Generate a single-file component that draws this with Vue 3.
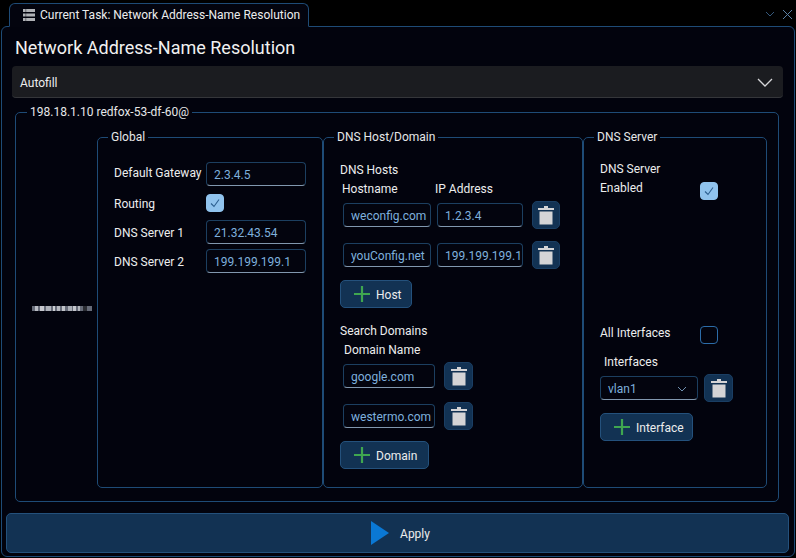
<script setup>
const hosts = [
  { name: 'weconfig.com', ip: '1.2.3.4' },
  { name: 'youConfig.net', ip: '199.199.199.1' }
]
const domains = ['google.com', 'westermo.com']
// stripes of the small device picture: [x, width, colour]
const ports = [
  [0, 60, '#666b78'], [3, 3, '#b9bcc4'], [8, 4, '#c6c8ce'], [14, 5, '#aeb2ba'], [21, 2, '#cdd0d4'],
  [25, 3, '#b6b9c0'], [30, 3, '#c2c5ca'], [36, 4, '#a9adb5'], [41, 3, '#c4c6cc'], [46, 2, '#b3b6bd'], [51, 4, '#2b2d33']
]
</script>

<template>
  <div class="app">
    <div class="tabbar">
      <div class="tab">
        <svg class="tab-icon" width="12" height="12" viewBox="0 0 12 12">
          <rect x="0" y="0" width="12" height="3" fill="#b0b2b6" />
          <rect x="0" y="4.5" width="12" height="3" fill="#b0b2b6" />
          <rect x="0" y="9" width="12" height="3" fill="#b0b2b6" />
          <rect x="2.5" y="0" width="0.7" height="12" fill="#03040e" opacity="0.6" />
        </svg>
        <span>Current Task: Network Address-Name Resolution</span>
      </div>
      <div class="win-btns">
        <svg width="10" height="6" viewBox="0 0 10 6"><path d="M1 1l4 4 4-4" fill="none" stroke="#35587c" stroke-width="1" /></svg>
        <svg width="11" height="11" viewBox="0 0 11 11"><path d="M1 1l9 9M10 1l-9 9" fill="none" stroke="#5b80a6" stroke-width="1" /></svg>
      </div>
    </div>

    <div class="panel">
      <h1 class="title">Network Address-Name Resolution</h1>

      <div class="autofill">
        <span>Autofill</span>
        <svg width="16" height="9" viewBox="0 0 16 9"><path d="M1 1l7 7 7-7" fill="none" stroke="#d6d7d9" stroke-width="1.3" /></svg>
      </div>

      <fieldset class="group outer">
        <legend>198.18.1.10 redfox-53-df-60@</legend>
        <div class="columns">
          <div class="device">
            <svg width="60" height="5" viewBox="0 0 60 5">
              <rect v-for="p in ports" :key="p[0] + p[2]" :x="p[0]" y="0" :width="p[1]" height="5" :fill="p[2]" />
            </svg>
          </div>

          <fieldset class="group global">
            <legend>Global</legend>
            <div class="form-row first">
              <label>Default Gateway</label>
              <div class="input wide">2.3.4.5</div>
            </div>
            <div class="form-row check-row">
              <label>Routing</label>
              <span class="check on">
                <svg width="12" height="12" viewBox="0 0 12 12"><path d="M2 6.5l3 3 5-7" fill="none" stroke="#2c5f8f" stroke-width="1.1" /></svg>
              </span>
            </div>
            <div class="form-row dns1">
              <label>DNS Server 1</label>
              <div class="input wide">21.32.43.54</div>
            </div>
            <div class="form-row dns2">
              <label>DNS Server 2</label>
              <div class="input wide">199.199.199.1</div>
            </div>
          </fieldset>

          <fieldset class="group hosts">
            <legend>DNS Host/Domain</legend>
            <div class="sub-title">DNS Hosts</div>
            <div class="col-heads">
              <span class="hostname">Hostname</span>
              <span>IP Address</span>
            </div>
            <div v-for="h in hosts" :key="h.name" class="entry host-entry">
              <div class="input host-name">{{ h.name }}</div>
              <div class="input host-ip">{{ h.ip }}</div>
              <button class="trash host-trash">
                <svg width="16" height="20" viewBox="0 0 16 20">
                  <rect x="0" y="3" width="16" height="2" fill="#d4d4d6" />
                  <rect x="6" y="1" width="4" height="2" fill="#d4d4d6" />
                  <rect x="1.5" y="6.5" width="13" height="13" fill="#d4d4d6" />
                </svg>
              </button>
            </div>
            <button class="add add-host">
              <svg width="16" height="16" viewBox="0 0 16 16"><path d="M8 0v16M0 8h16" stroke="#3fa650" stroke-width="2.2" /></svg>
              <span>Host</span>
            </button>

            <div class="sub-title search">Search Domains</div>
            <div class="domain-head">Domain Name</div>
            <div v-for="d in domains" :key="d" class="entry domain-entry">
              <div class="input domain">{{ d }}</div>
              <button class="trash domain-trash">
                <svg width="16" height="20" viewBox="0 0 16 20">
                  <rect x="0" y="3" width="16" height="2" fill="#d4d4d6" />
                  <rect x="6" y="1" width="4" height="2" fill="#d4d4d6" />
                  <rect x="1.5" y="6.5" width="13" height="13" fill="#d4d4d6" />
                </svg>
              </button>
            </div>
            <button class="add add-domain">
              <svg width="16" height="16" viewBox="0 0 16 16"><path d="M8 0v16M0 8h16" stroke="#3fa650" stroke-width="2.2" /></svg>
              <span>Domain</span>
            </button>
          </fieldset>

          <fieldset class="group server">
            <legend>DNS Server</legend>
            <div class="enabled-row">
              <div class="enabled-label">DNS Server<br />Enabled</div>
              <span class="check on enabled-check">
                <svg width="12" height="12" viewBox="0 0 12 12"><path d="M2 6.5l3 3 5-7" fill="none" stroke="#2c5f8f" stroke-width="1.1" /></svg>
              </span>
            </div>
            <div class="all-row">
              <label>All Interfaces</label>
              <span class="check"></span>
            </div>
            <div class="if-head">Interfaces</div>
            <div class="entry if-entry">
              <div class="input select">
                <span>vlan1</span>
                <svg width="10" height="6" viewBox="0 0 10 6"><path d="M1 1l4 4 4-4" fill="none" stroke="#6f8fae" stroke-width="1" /></svg>
              </div>
              <button class="trash">
                <svg width="16" height="20" viewBox="0 0 16 20">
                  <rect x="0" y="3" width="16" height="2" fill="#d4d4d6" />
                  <rect x="6" y="1" width="4" height="2" fill="#d4d4d6" />
                  <rect x="1.5" y="6.5" width="13" height="13" fill="#d4d4d6" />
                </svg>
              </button>
            </div>
            <button class="add add-if">
              <svg width="16" height="16" viewBox="0 0 16 16"><path d="M8 0v16M0 8h16" stroke="#3fa650" stroke-width="2.2" /></svg>
              <span>Interface</span>
            </button>
          </fieldset>
        </div>
      </fieldset>

      <button class="apply">
        <svg width="18" height="24" viewBox="0 0 18 24"><path d="M0 0l18 12L0 24z" fill="#0a78d4" /></svg>
        <span>Apply</span>
      </button>
    </div>
  </div>
</template>

<style>
html, body {
  margin: 0;
  background: #000;
}
</style>

<style scoped>
.app {
  width: 796px;
  height: 558px;
  overflow: hidden;
  box-sizing: border-box;
  padding: 0 1px 1px 1px;
  display: flex;
  flex-direction: column;
  font-family: Roboto, "Open Sans", sans-serif;
  font-size: 12px;
  color: #eceded;
  background: #000;
}

.tabbar {
  height: 26px;
  display: flex;
  align-items: flex-end;
  padding-left: 8px;
  flex-shrink: 0;
}

.tab {
  position: relative;
  z-index: 1;
  box-sizing: border-box;
  width: 300px;
  height: 24px;
  margin-bottom: -1px;
  display: flex;
  align-items: center;
  gap: 5px;
  padding-left: 13px;
  border: 1px solid #1e4b76;
  border-bottom: 1px solid #03040e;
  border-radius: 6px 6px 0 0;
  background: #03040e;
  white-space: nowrap;
}

.tab-icon {
  flex-shrink: 0;
}

.win-btns {
  margin-left: auto;
  display: flex;
  align-items: center;
  gap: 7px;
  padding-right: 2px;
  height: 22px;
  margin-bottom: 1px;
}

.panel {
  flex: 1;
  box-sizing: border-box;
  border: 1px solid #1e4b76;
  border-radius: 6px;
  background: #02030d;
  padding: 0 11px 3px 3px;
  display: flex;
  flex-direction: column;
  min-height: 0;
}

.title {
  margin: 9px 0 0 10px;
  font-size: 18px;
  line-height: 24px;
  font-weight: 400;
  color: #f1f1f1;
}

.autofill {
  height: 32px;
  flex-shrink: 0;
  box-sizing: border-box;
  margin: 6px 0 0 7px;
  padding: 2px 10px 0 8px;
  display: flex;
  align-items: center;
  justify-content: space-between;
  background: #1b1c20;
  border-bottom: 1px solid #35363a;
  border-radius: 4px;
}

.group {
  margin: 0;
  padding: 0;
  min-width: 0;
  box-sizing: border-box;
  border: 1px solid #1e4b76;
  border-radius: 5px;
}

.group legend {
  margin-left: 10px;
  padding: 0 3px;
  line-height: 16px;
  height: 16px;
  color: #e6e7e8;
}

.outer {
  flex-shrink: 0;
  margin: 6px 4px 0 10px;
  height: 398px;
}

.outer > legend {
  margin-left: 11px;
}

.columns {
  display: grid;
  grid-template-columns: 81px 226px 260px 184px;
  height: 359px;
  margin-top: 9px;
}

.device {
  display: flex;
  align-items: center;
  padding: 0 0 0 16px;
}

.form-row {
  display: flex;
  align-items: center;
  padding-left: 16px;
}

.form-row label {
  width: 92px;
  flex-shrink: 0;
  white-space: nowrap;
  margin-top: 2px;
}

.form-row.first label {
  margin-top: -2px;
}

.first {
  margin-top: 17px;
}

.check-row {
  margin-top: 8px;
}

.dns1 {
  margin-top: 8px;
}

.dns2 {
  margin-top: 5px;
}

.input {
  box-sizing: border-box;
  height: 24px;
  display: flex;
  align-items: center;
  padding: 2px 0 0 7px;
  color: #7eb0dd;
  white-space: nowrap;
  overflow: hidden;
  border: 1px solid #1c3f60;
  border-bottom-color: #8197ae;
  border-radius: 4px;
  background: #03040e;
}

.wide {
  width: 100px;
}

.check {
  box-sizing: border-box;
  width: 18px;
  height: 18px;
  display: inline-flex;
  align-items: center;
  justify-content: center;
  border: 1px solid #2c6ca8;
  border-radius: 4px;
}

.check.on {
  background: #90c3ed;
  border-color: #90c3ed;
}

.sub-title {
  margin: 16px 0 0 16px;
  line-height: 18px;
}

.col-heads {
  display: flex;
  margin-top: 1px;
  line-height: 18px;
  padding-left: 18px;
}

.hostname {
  width: 93px;
}

.entry {
  display: flex;
  align-items: center;
}

.host-entry {
  padding-left: 19px;
  margin-top: 3px;
  height: 28px;
}

.host-entry + .host-entry {
  margin-top: 12px;
}

.host-name {
  width: 88px;
}

.host-ip {
  width: 86px;
  margin-left: 6px;
}

.trash {
  box-sizing: border-box;
  width: 29px;
  height: 28px;
  padding: 0;
  display: inline-flex;
  align-items: center;
  justify-content: center;
  background: #123253;
  border: 1px solid #1a3e63;
  border-radius: 5px;
}

.host-trash {
  width: 28px;
  margin-left: 9px;
}

.add {
  box-sizing: border-box;
  height: 28px;
  padding: 0 0 0 13px;
  display: flex;
  align-items: center;
  gap: 6px;
  font: inherit;
  color: #eceded;
  background: #123253;
  border: 1px solid #24517c;
  border-radius: 5px;
}

.add span {
  margin-top: 2px;
}

.add-host {
  width: 72px;
  margin: 11px 0 0 16px;
}

.sub-title.search {
  margin-top: 14px;
}

.domain-head {
  margin: 1px 0 0 20px;
  line-height: 18px;
}

.domain-entry {
  padding-left: 19px;
  margin-top: 3px;
  height: 28px;
}

.domain-entry + .domain-entry {
  margin-top: 12px;
}

.domain {
  width: 92px;
}

.domain-trash {
  margin-left: 9px;
}

.add-domain {
  width: 89px;
  margin: 11px 0 0 16px;
}

.enabled-row {
  display: flex;
  padding-left: 16px;
  margin-top: 15px;
  height: 166px;
}

.enabled-label {
  width: 100px;
  line-height: 19px;
}

.enabled-check {
  margin-top: 22px;
}

.all-row {
  display: flex;
  align-items: center;
  padding-left: 16px;
  height: 18px;
}

.all-row label {
  width: 100px;
  margin-top: -4px;
}

.if-head {
  margin: 9px 0 0 20px;
  line-height: 18px;
}

.if-entry {
  padding-left: 16px;
  margin-top: 3px;
  gap: 6px;
}

.select {
  width: 98px;
  justify-content: space-between;
  padding-right: 10px;
}

.add-if {
  width: 93px;
  margin: 11px 0 0 16px;
}

.apply {
  flex-shrink: 0;
  box-sizing: border-box;
  height: 40px;
  width: 783px;
  margin: 11px 0 0 1px;
  padding: 0 0 0 6px;
  display: flex;
  align-items: center;
  justify-content: center;
  gap: 11px;
  font: inherit;
  color: #eceded;
  background: #123253;
  border: 1px solid #24517c;
  border-radius: 5px;
}

.apply span {
  margin-top: 1px;
}
</style>
